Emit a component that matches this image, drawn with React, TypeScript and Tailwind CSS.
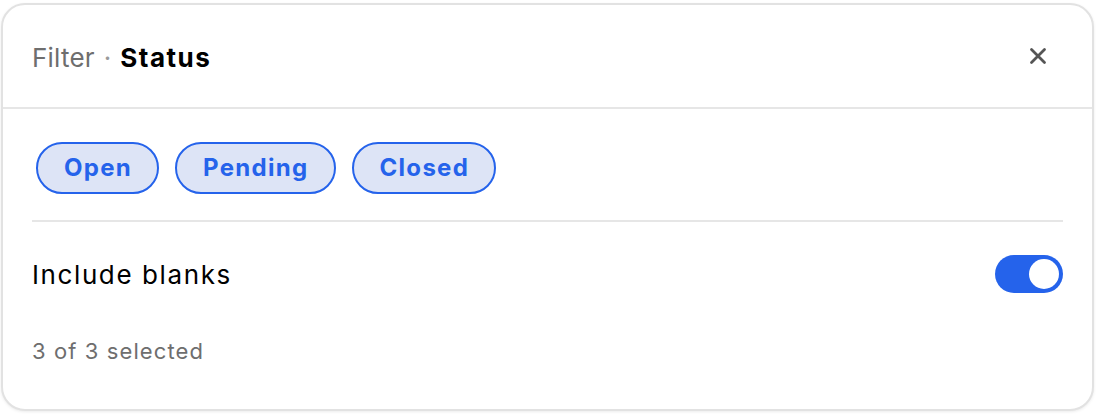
import { useState } from 'react'

const statuses = ['Open', 'Pending', 'Closed']

export default function App() {
  const [selected, setSelected] = useState<string[]>(statuses)
  const [blanks, setBlanks] = useState(true)

  const toggle = (s: string) =>
    setSelected(prev => (prev.includes(s) ? prev.filter(p => p !== s) : [...prev, s]))

  return (
    <div className="w-[1096px] h-[414px] bg-white pt-[3px] pl-[1px] font-['Inter',sans-serif]">
      <div className="w-[1093px] h-[408px] rounded-[24px] border-2 border-[#e2e2e2] bg-white overflow-hidden shadow-[0_1px_3px_rgba(0,0,0,0.08)]">
        {/* Header */}
        <div className="h-[104px] flex items-center justify-between pl-[29px] pr-[45px] border-b-2 border-[#e6e6e6]">
          <div className="text-[26px] mt-[3px]">
            <span className="text-[#6e6e6e] tracking-[0.2px]">Filter</span>
            <span className="text-[#9a9a9a] mx-[9px]">·</span>
            <span className="font-bold text-black tracking-[1.5px]">Status</span>
          </div>
          <button className="text-[#555]">
            <svg width="18" height="18" viewBox="0 0 18 18" fill="none" stroke="currentColor" strokeWidth="2.8" strokeLinecap="round">
              <path d="M2.5 2.5L15.5 15.5M15.5 2.5L2.5 15.5" />
            </svg>
          </button>
        </div>

        {/* Body */}
        <div className="px-[29px] pt-[33px]">
          <div className="flex gap-[16px] ml-[4px]">
            {statuses.map(s => (
              <button
                key={s}
                onClick={() => toggle(s)}
                className={
                  selected.includes(s)
                    ? 'h-[52px] pl-[26px] pr-[25px] rounded-full border-2 border-[#2563eb] bg-[#dde4f6] text-[#2563eb] text-[24px] font-bold tracking-[1.3px]'
                    : 'h-[52px] pl-[26px] pr-[25px] rounded-full border-2 border-[#d4d4d4] bg-white text-[#555] text-[24px] font-bold tracking-[1.3px]'
                }
              >
                {s}
              </button>
            ))}
          </div>

          <div className="mt-[26px] border-t-2 border-[#e6e6e6]" />

          <div className="flex items-center justify-between h-[74px] mt-[15px]">
            <span className="text-[26px] text-black tracking-[1.6px]">Include blanks</span>
            <button
              onClick={() => setBlanks(!blanks)}
              className={
                blanks
                  ? 'w-[68px] h-[38px] rounded-full bg-[#2563eb] flex items-center justify-end px-[4px]'
                  : 'w-[68px] h-[38px] rounded-full bg-[#d4d4d4] flex items-center justify-start px-[4px]'
              }
            >
              <span className="w-[30px] h-[30px] rounded-full bg-white block" />
            </button>
          </div>

          <div className="mt-[24px] text-[22px] text-[#6e6e6e] tracking-[1.1px]">
            {selected.length} of {statuses.length} selected
          </div>
        </div>
      </div>
    </div>
  )
}
